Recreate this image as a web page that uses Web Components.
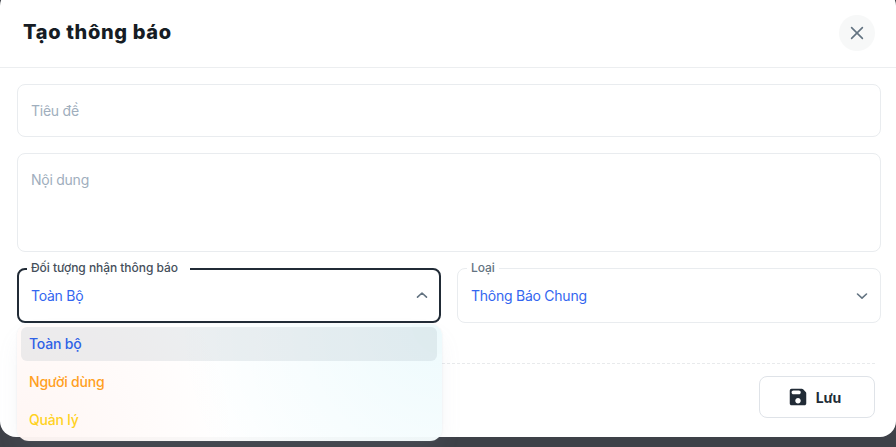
<!DOCTYPE html>
<html>
<head>
<meta charset="utf-8">
<style>
  html, body { margin: 0; height: 100%; overflow: hidden; }
  body { background: #3e4148; font-family: Inter, "Noto Sans", "Liberation Sans", sans-serif; color: #212b36; }
</style>
</head>
<body>
<notice-dialog>
  <span slot="title">Tạo thông báo</span>
  <text-box placeholder="Tiêu đề" style="height:53px"></text-box>
  <text-box placeholder="Nội dung" style="height:99px"></text-box>
  <div style="display:grid;grid-template-columns:424px 424px;gap:16px">
    <select-box label="Đối tượng nhận thông báo" value="Toàn Bộ" open>
      <option-item selected color="#2f62e6">Toàn bộ</option-item>
      <option-item color="#ffa01f">Người dùng</option-item>
      <option-item color="#ffd21f">Quản lý</option-item>
    </select-box>
    <select-box label="Loại" value="Thông Báo Chung"></select-box>
  </div>
  <save-button slot="actions">Lưu</save-button>
</notice-dialog>

<script>
class NoticeDialog extends HTMLElement {
  constructor() {
    super();
    this.attachShadow({ mode: 'open' });
    this.shadowRoot.innerHTML = `
      <style>
        :host { display: block; height: 447px; }
        .paper {
          margin-top: -10px;
          height: 447px;
          box-sizing: border-box;
          background: #fff;
          border-radius: 16px;
          display: flex;
          flex-direction: column;
        }
        header {
          height: 78px;
          box-sizing: border-box;
          padding: 8px 21px 0 23px;
          border-bottom: 1px solid #eceef0;
          display: flex;
          align-items: center;
          justify-content: space-between;
          flex: none;
        }
        h2 {
          margin: 0;
          padding-bottom: 2px;
          font-size: 20px;
          font-weight: 800;
          letter-spacing: .65px;
          color: #161c24;
        }
        button {
          width: 36px;
          height: 36px;
          padding: 0;
          border: 0;
          border-radius: 50%;
          background: #f7f8f8;
          display: flex;
          align-items: center;
          justify-content: center;
          color: #637381;
        }
        .body {
          padding: 16px 15px 0 17px;
          display: flex;
          flex-direction: column;
          gap: 16px;
        }
        footer {
          margin: 40px 21px 0 17px;
          border-top: 1px dashed #e8eaec;
          padding-top: 12px;
          display: flex;
          justify-content: flex-end;
        }
      </style>
      <div class="paper">
        <header>
          <h2><slot name="title"></slot></h2>
          <button aria-label="close">
            <svg width="20" height="20" viewBox="0 0 20 20" fill="none" stroke="currentColor" stroke-width="1.6" stroke-linecap="round"><path d="M4.6 4.6l10.8 10.8M15.4 4.6L4.6 15.4"/></svg>
          </button>
        </header>
        <div class="body"><slot></slot></div>
        <footer><slot name="actions"></slot></footer>
      </div>`;
  }
}

class TextBox extends HTMLElement {
  constructor() {
    super();
    this.attachShadow({ mode: 'open' });
  }
  connectedCallback() {
    this.shadowRoot.innerHTML = `
      <style>
        :host { display: block; box-sizing: border-box; border: 1px solid #e9ecef; border-radius: 8px; padding: 16px 13px; font-size: 14px; line-height: 20px; letter-spacing: -.25px; color: #a0aebd; }
      </style>
      <span>${this.getAttribute('placeholder')}</span>`;
  }
}

class SelectBox extends HTMLElement {
  constructor() {
    super();
    this.attachShadow({ mode: 'open' });
  }
  connectedCallback() {
    const open = this.hasAttribute('open');
    const chevron = open ? 'M3.5 9.2L8 5l4.5 4.2' : 'M3.5 6L8 10.2 12.5 6';
    this.shadowRoot.innerHTML = `
      <style>
        :host { display: block; position: relative; height: 55px; font-size: 14px; }
        .box {
          height: 100%;
          box-sizing: border-box;
          display: flex;
          align-items: center;
          justify-content: space-between;
          padding: 0 10px 0 13px;
          border: 1px solid #e9ecef;
          border-radius: 8px;
          color: #3366f0;
          letter-spacing: -.25px;
        }
        :host([open]) .box { border: 2px solid #212b36; padding: 0 9px 0 12px; }
        label {
          position: absolute;
          left: 10px;
          top: -6px;
          padding: 0 4px;
          background: #fff;
          font-size: 12px;
          line-height: 12px;
          font-weight: 500;
          letter-spacing: -.05px;
          color: #637381;
        }
        :host([open]) label { padding-right: 12px; color: #454f5b; }
        svg { color: #637381; }
        .menu {
          position: absolute;
          left: 0;
          top: 56px;
          width: 425px;
          height: 117px;
          box-sizing: border-box;
          padding: 3px 5px 3px 4px;
          border-radius: 12px;
          background:
            radial-gradient(circle at 100% 0, rgba(0,184,217,.07), transparent 60%),
            radial-gradient(circle at 0 100%, rgba(255,86,48,.06), transparent 50%),
            rgba(255,255,255,.97);
          box-shadow: 0 0 2px rgba(145,158,171,.2), 0 12px 24px -4px rgba(145,158,171,.12);
          z-index: 2;
        }
      </style>
      <label>${this.getAttribute('label')}</label>
      <div class="box">
        <span>${this.getAttribute('value')}</span>
        <svg width="16" height="16" viewBox="0 0 16 16" fill="none" stroke="currentColor" stroke-width="1.6" stroke-linecap="round" stroke-linejoin="round"><path d="${chevron}"/></svg>
      </div>
      ${open ? '<div class="menu"><slot></slot></div>' : ''}`;
  }
}

class OptionItem extends HTMLElement {
  constructor() {
    super();
    this.attachShadow({ mode: 'open' });
  }
  connectedCallback() {
    this.shadowRoot.innerHTML = `
      <style>
        :host { display: flex; align-items: center; height: 34px; margin-bottom: 4px; padding: 0 8px 2px; box-sizing: border-box; border-radius: 6px; font-size: 14px; font-weight: 500; letter-spacing: -.2px; color: ${this.getAttribute('color')}; }
        :host([selected]) { background: rgba(145,158,171,.17); }
      </style>
      <slot></slot>`;
  }
}

class SaveButton extends HTMLElement {
  constructor() {
    super();
    this.attachShadow({ mode: 'open' });
    this.shadowRoot.innerHTML = `
      <style>
        :host { display: flex; align-items: center; justify-content: center; gap: 7px; padding-right: 6px; box-sizing: border-box; width: 116px; height: 42px; border: 1px solid #dfe3e8; border-radius: 8px; font-size: 14px; font-weight: 700; letter-spacing: -.2px; color: #212b36; }
      </style>
      <svg width="22" height="22" viewBox="0 0 24 24" fill="currentColor"><path d="M17.59 3.59c-.38-.38-.89-.59-1.42-.59H5a2 2 0 0 0-2 2v14c0 1.1.9 2 2 2h14c1.1 0 2-.9 2-2V7.83c0-.53-.21-1.04-.59-1.41l-2.82-2.83zM12 19c-1.66 0-3-1.34-3-3s1.34-3 3-3 3 1.34 3 3-1.34 3-3 3zm1-10H7c-1.1 0-2-.9-2-2s.9-2 2-2h6c1.1 0 2 .9 2 2s-.9 2-2 2z"/></svg>
      <span><slot></slot></span>`;
  }
}

customElements.define('notice-dialog', NoticeDialog);
customElements.define('text-box', TextBox);
customElements.define('select-box', SelectBox);
customElements.define('option-item', OptionItem);
customElements.define('save-button', SaveButton);
</script>
</body>
</html>
